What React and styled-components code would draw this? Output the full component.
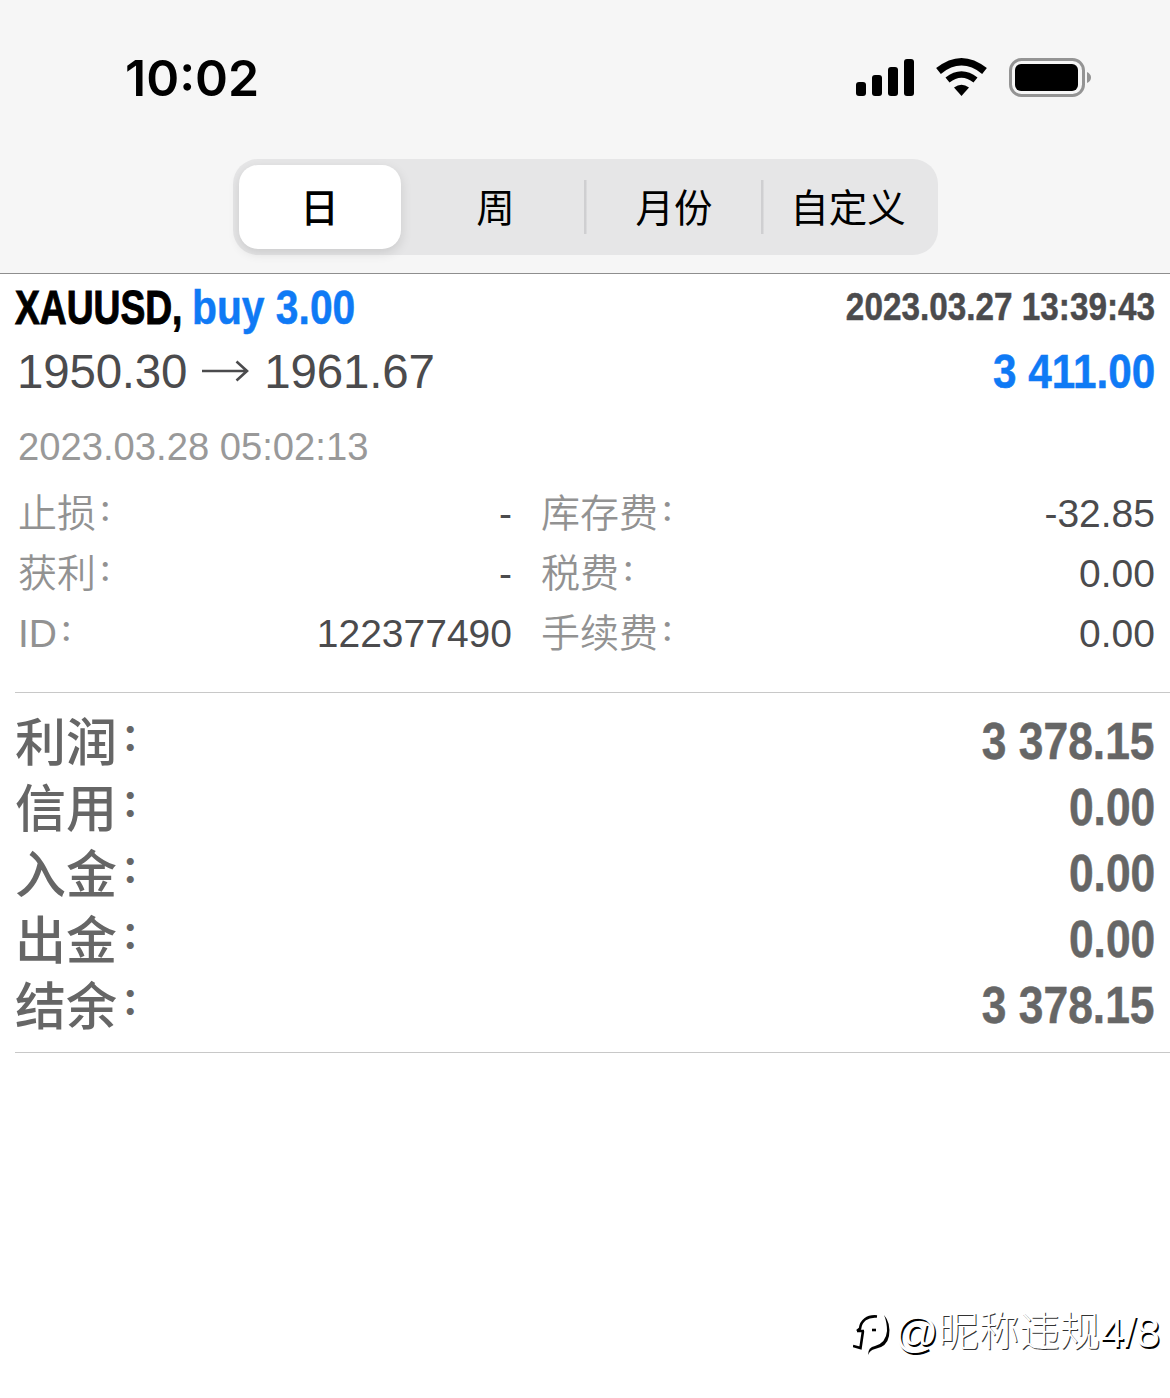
import styled, { createGlobalStyle } from 'styled-components'

const details = [
    { label: '止损', value: '-' },
    { label: '库存费', value: '-32.85' },
    { label: '获利', value: '-' },
    { label: '税费', value: '0.00' },
    { label: 'ID', value: '122377490' },
    { label: '手续费', value: '0.00' },
]

const totals = [
    { label: '利润', value: '3 378.15' },
    { label: '信用', value: '0.00' },
    { label: '入金', value: '0.00' },
    { label: '出金', value: '0.00' },
    { label: '结余', value: '3 378.15' },
]

const tabs = ['日', '周', '月份', '自定义']

const App = () => {
    return (
        <Screen>
            <Global />
            <Header>
                <StatusBar>
                    <Clock>10:02</Clock>
                    <Signals />
                </StatusBar>
                <Segments>
                    {tabs.map((tab, i) => (
                        <Segment key={tab} $active={i === 0} $divided={i > 1}>{tab}</Segment>
                    ))}
                </Segments>
            </Header>

            <Deal>
                <Line>
                    <Title>
                        <Symbol>XAUUSD,</Symbol>
                        <Side>buy 3.00</Side>
                    </Title>
                    <OpenTime>2023.03.27 13:39:43</OpenTime>
                </Line>
                <Line>
                    <Prices>
                        1950.30
                        <svg width="48" height="24" viewBox="0 0 48 24" fill="none" stroke="#4b4b4d" strokeWidth="2.6">
                            <path d="M0 12H45M34.500 2.500L45 12L34.500 21.500" />
                        </svg>
                        1961.67
                    </Prices>
                    <Profit>3 411.00</Profit>
                </Line>
                <CloseTime>2023.03.28 05:02:13</CloseTime>
                <Details>
                    {details.map((item) => (
                        <Detail key={item.label}>
                            <DetailLabel>{item.label}<span>：</span></DetailLabel>
                            <span>{item.value}</span>
                        </Detail>
                    ))}
                </Details>
            </Deal>

            <Totals>
                {totals.map((item) => (
                    <Total key={item.label}>
                        <TotalLabel>{item.label}<span>：</span></TotalLabel>
                        <TotalValue>{item.value}</TotalValue>
                    </Total>
                ))}
            </Totals>

            <Watermark>
                <svg width="42" height="50" viewBox="0 0 42 50">
                    <g fill="none" stroke="#000" strokeWidth="2.6">
                        <path d="M4 24L7 21.500C8 14 14 8.500 24 9.500M4 24H11M10 24L7.500 41L0 39" />
                        <path d="M19 23H23" />
                    </g>
                    <path d="M31 8Q38 16 36 29Q34 40 22 42Q17 43 15 48Q15 40 22 39Q33 36 34 24Q34 15 31 8Z" />
                </svg>
                <span className="at">@</span>昵称违规<span className="count">4/8</span>
            </Watermark>
        </Screen>
    )
}

const Signals = () => (
    <svg width="238" height="44" viewBox="0 0 238 44">
        <rect x="1" y="26" width="10" height="14" rx="3" />
        <rect x="17" y="19" width="10" height="21" rx="3" />
        <rect x="33" y="11" width="10" height="29" rx="3" />
        <rect x="49" y="3" width="10" height="37" rx="3" />
        <g fill="none" stroke="#000">
            <path d="M83.500 15Q106.500 -3.500 129.500 15" strokeWidth="7.500" />
            <path d="M92.500 24Q106.500 13 120.500 24" strokeWidth="6.500" />
        </g>
        <path d="M99 31.500Q106.500 26 114 31.500L106.500 40Z" />
        <rect x="155.500" y="3.500" width="73" height="36" rx="11" fill="none" stroke="#949494" strokeWidth="3" />
        <rect x="160" y="8" width="63" height="27" rx="6" />
        <path d="M232 16Q236 18 236 21.500Q236 25 232 27Z" fill="#949494" />
    </svg>
)

const Global = createGlobalStyle`
body {
    margin: 0;
    background: #fff;
}
`

const Screen = styled.main`
width: 1170px;
height: 1398px;
box-sizing: border-box;
position: relative;
overflow: hidden;
background: #fff;
font-family: 'Liberation Sans', 'Noto Sans CJK SC', sans-serif;
color: #4b4b4d;
white-space: nowrap;
`

const Header = styled.header`
height: 274px;
box-sizing: border-box;
background: #f6f6f6;
border-bottom: 1px solid #8e8e8e;
display: flex;
flex-direction: column;
align-items: center;
`

const StatusBar = styled.div`
width: 100%;
height: 159px;
box-sizing: border-box;
padding: 56px 77px 0 125px;
display: flex;
justify-content: space-between;
align-items: flex-start;
color: #000;
`

const Clock = styled.div`
font: 600 50px/44px Inter, sans-serif;
`

const Segments = styled.nav`
width: 705px;
height: 96px;
box-sizing: border-box;
padding: 6px;
border-radius: 25px;
background: #e6e6e7;
display: grid;
grid-template-columns: 162px 183px 177px 171px;
`

const Segment = styled.div`
box-sizing: border-box;
height: 84px;
padding: 0 0 4px ${(p) => (p.$active ? 0 : p.$divided ? 4 : 7)}px;
display: flex;
align-items: center;
justify-content: center;
font: ${(p) => (p.$active ? 500 : 400)} 38.5px/80px 'Noto Sans CJK SC', sans-serif;
color: #000;
border-radius: ${(p) => (p.$active ? '19px' : '0')};
background: ${(p) => (p.$active
        ? '#fff'
        : p.$divided ? 'linear-gradient(#cfcfd1, #cfcfd1) 0 50% / 2.5px 54px no-repeat' : 'none')};
box-shadow: ${(p) => (p.$active ? '0 4px 12px rgba(0, 0, 0, .12)' : 'none')};
`

const Deal = styled.section`
height: 419px;
box-sizing: border-box;
margin-left: 15px;
padding: 1px 15px 0 0;
border-bottom: 1px solid #c8c8c8;
`

const Line = styled.div`
height: 64px;
display: flex;
justify-content: space-between;
align-items: center;
`

// condensed bold face: the regular bold squeezed horizontally
const Bold = styled.span`
font-weight: 700;
font-size: 48px;
-webkit-text-stroke: .5px currentColor;
transform: scaleX(.87);
transform-origin: 100% 50%;
`

const Title = styled.div`
display: flex;
`

const Symbol = styled(Bold)`
width: 177px;
color: #000;
transform: scaleX(.775);
transform-origin: 0 50%;
-webkit-text-stroke: 1px currentColor;
`

const Side = styled(Bold)`
color: #0f7af5;
transform: scaleX(.85);
transform-origin: 0 50%;
`

const OpenTime = styled(Bold)`
font-size: 39px;
transform: scaleX(.854);
`

const Prices = styled.div`
display: flex;
align-items: center;
padding-left: 2px;
font-size: 47.5px;
letter-spacing: -.2px;
svg {
    margin: 0 14px 0 15px;
}
`

const Profit = styled(Bold)`
color: #0f7af5;
transform: scaleX(.88);
`

const CloseTime = styled.div`
height: 81px;
padding-left: 3px;
font-size: 38.2px;
line-height: 88px;
color: #999;
`

const Details = styled.div`
display: grid;
grid-template-columns: 494px 614px;
column-gap: 29px;
padding-left: 3px;
`

const Detail = styled.div`
height: 60px;
display: flex;
justify-content: space-between;
align-items: center;
font-size: 39px;
line-height: 60px;
`

const DetailLabel = styled.span`
color: #929292;
font-weight: 350;
span {
    margin-left: 2px;
    font-size: 29px;
    font-weight: 500;
    line-height: 1;
    vertical-align: 6px;
}
`

const Totals = styled.section`
height: 360px;
box-sizing: border-box;
margin-left: 15px;
padding: 15px 15px 0 0;
border-bottom: 1px solid #c8c8c8;
`

const Total = styled.div`
height: 66px;
display: flex;
justify-content: space-between;
align-items: center;
color: #666;
`

const TotalLabel = styled.span`
height: 70px;
font: 500 51px/66px 'Noto Sans CJK SC', sans-serif;
span {
    margin-left: 4px;
    font-size: 37px;
    font-weight: 700;
    line-height: 1;
    vertical-align: 10px;
}
`

const TotalValue = styled(Bold)`
font-size: 51px;
`

const Watermark = styled.div`
position: absolute;
right: 10px;
bottom: 36px;
display: flex;
align-items: center;
font: 300 40.5px/60px 'Liberation Sans', 'Noto Sans CJK SC', sans-serif;
color: #fff;
text-shadow: 1px 1px 0 #333;
.at,
.count {
    font-size: 43px;
    text-shadow: 1.5px 1.5px 0 #000;
}
`

export default App
